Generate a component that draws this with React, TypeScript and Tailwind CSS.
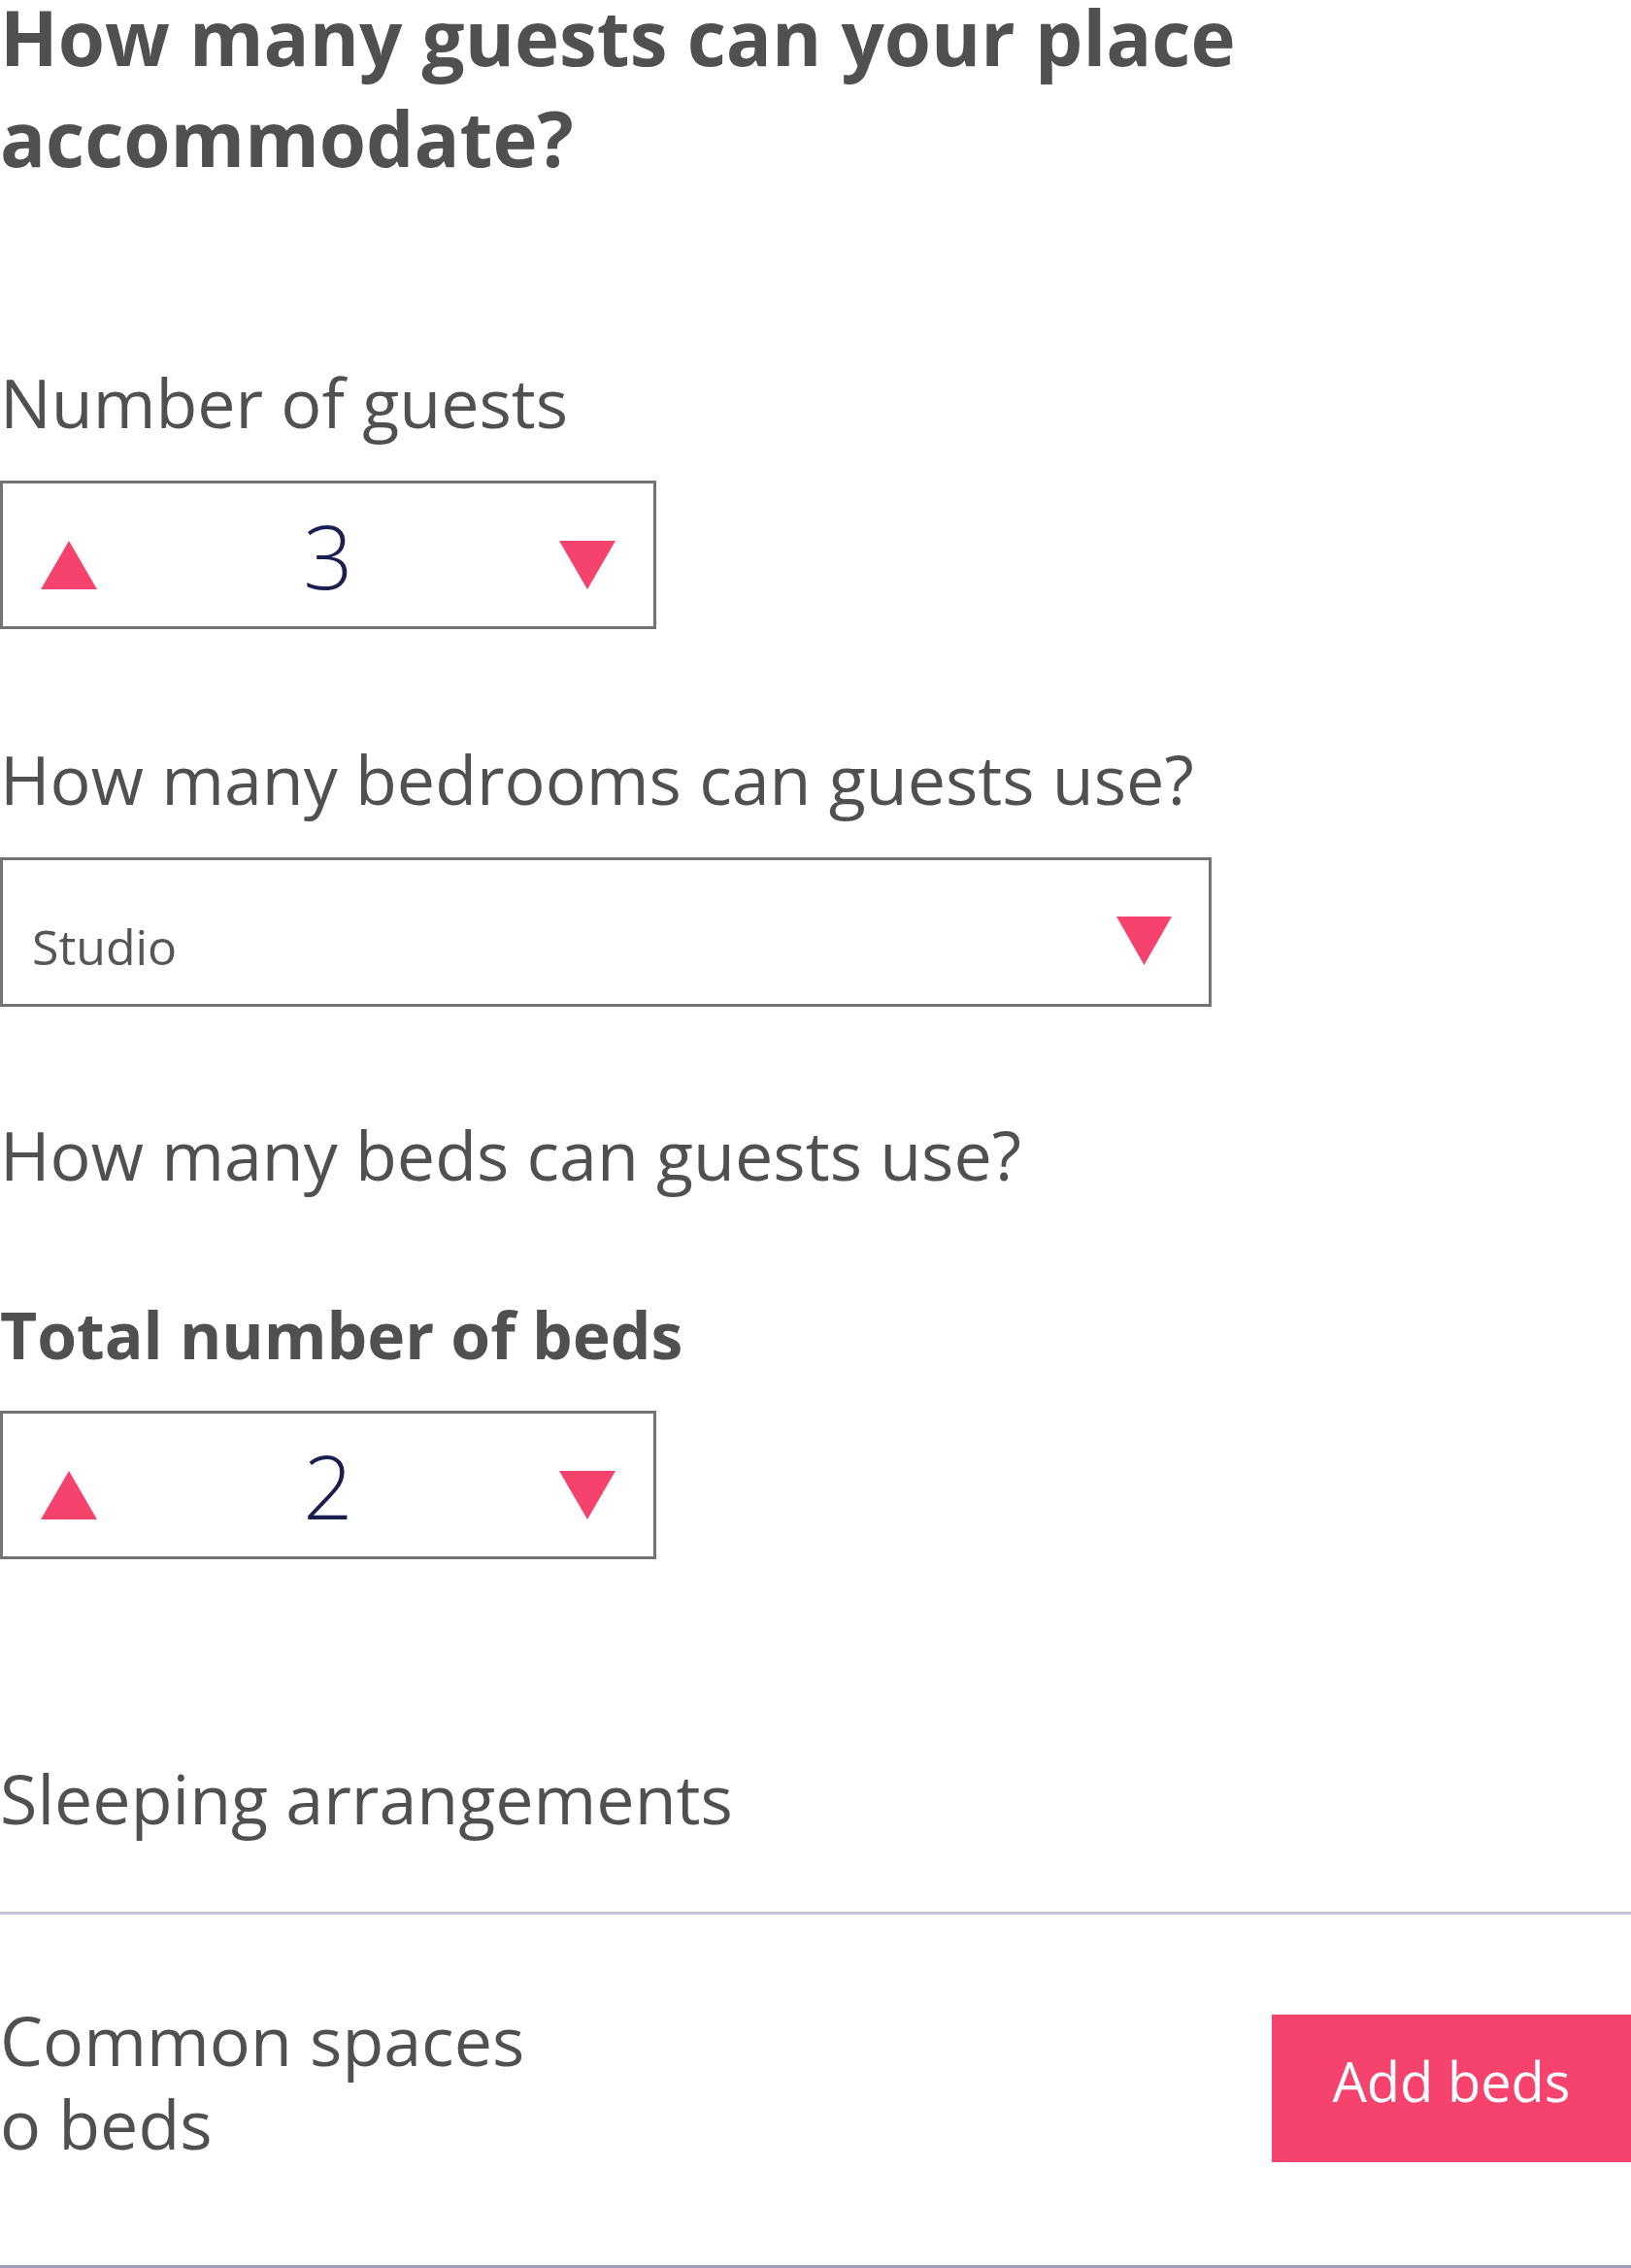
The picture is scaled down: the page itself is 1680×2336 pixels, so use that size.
import React from 'react';

const TriangleUp = ({ className = '' }: { className?: string }) => (
  <svg width="58" height="50" viewBox="0 0 58 50" className={className}>
    <polygon points="29,0 58,50 0,50" fill="#f5436d" />
  </svg>
);

const TriangleDown = ({ className = '', width = 58 }: { className?: string; width?: number }) => (
  <svg width={width} height="50" viewBox={`0 0 ${width} 50`} className={className}>
    <polygon points={`0,0 ${width},0 ${width / 2},50`} fill="#f5436d" />
  </svg>
);

const Stepper = ({ value }: { value: number }) => (
  <div className="w-[676px] h-[153px] border-[3px] border-[#737373] flex items-start justify-between px-[39px]">
    <TriangleUp className="mt-[59px]" />
    <span className="mt-[29px] text-[90px] leading-none font-light text-[#1b1f50]">{value}</span>
    <TriangleDown className="mt-[59px]" />
  </div>
);

const Label = ({ children, className = '' }: { children: React.ReactNode; className?: string }) => (
  <p className={`text-[70px] leading-none text-[#4f5150] ${className}`}>{children}</p>
);

export default function App() {
  return (
    <div className="w-full min-h-screen bg-white overflow-hidden font-['Open_Sans',sans-serif]">
      {/* Title, broken where the reference breaks it */}
      <h1 className="text-[78px] font-bold text-[#4f5150]">
        <span className="block leading-[76px]">How many guests can your place</span>
        <span className="block leading-[132px]">accommodate?</span>
      </h1>

      {/* Guests */}
      <Label className="mt-[171px]">Number of guests</Label>
      <div className="mt-[46px]">
        <Stepper value={3} />
      </div>

      {/* Bedrooms */}
      <Label className="mt-[119px]">How many bedrooms can guests use?</Label>
      <div className="mt-[46px] w-[1248px] h-[154px] border-[3px] border-[#737373] flex items-start justify-between pl-[30px] pr-[38px]">
        <span className="mt-[64px] text-[50px] leading-none text-[#555756]">Studio</span>
        <TriangleDown className="mt-[58px]" width={57} />
      </div>

      {/* Beds */}
      <Label className="mt-[117px]">How many beds can guests use?</Label>
      <p className="mt-[117px] text-[66px] leading-none font-bold text-[#4f5150]">Total number of beds</p>
      <div className="mt-[46px]">
        <Stepper value={2} />
      </div>

      {/* Sleeping arrangements */}
      <Label className="mt-[211px]">Sleeping arrangements</Label>
      <div className="mt-[82px] h-[3px] bg-[#c5c6d4]" />

      <div className="mt-[86px] flex items-start justify-between">
        <div className="text-[70px] text-[#4f5150]">
          <p className="leading-[86px]">Common spaces</p>
          <p className="leading-[86px]">o beds</p>
        </div>
        <button className="mt-[17px] w-[370px] h-[152px] bg-[#f5436d] text-white text-[56px] leading-none flex justify-center items-start pt-[40px]">
          Add beds
        </button>
      </div>

      <div className="mt-[103px] h-[3px] bg-[#9c9fb5]" />
    </div>
  );
}
